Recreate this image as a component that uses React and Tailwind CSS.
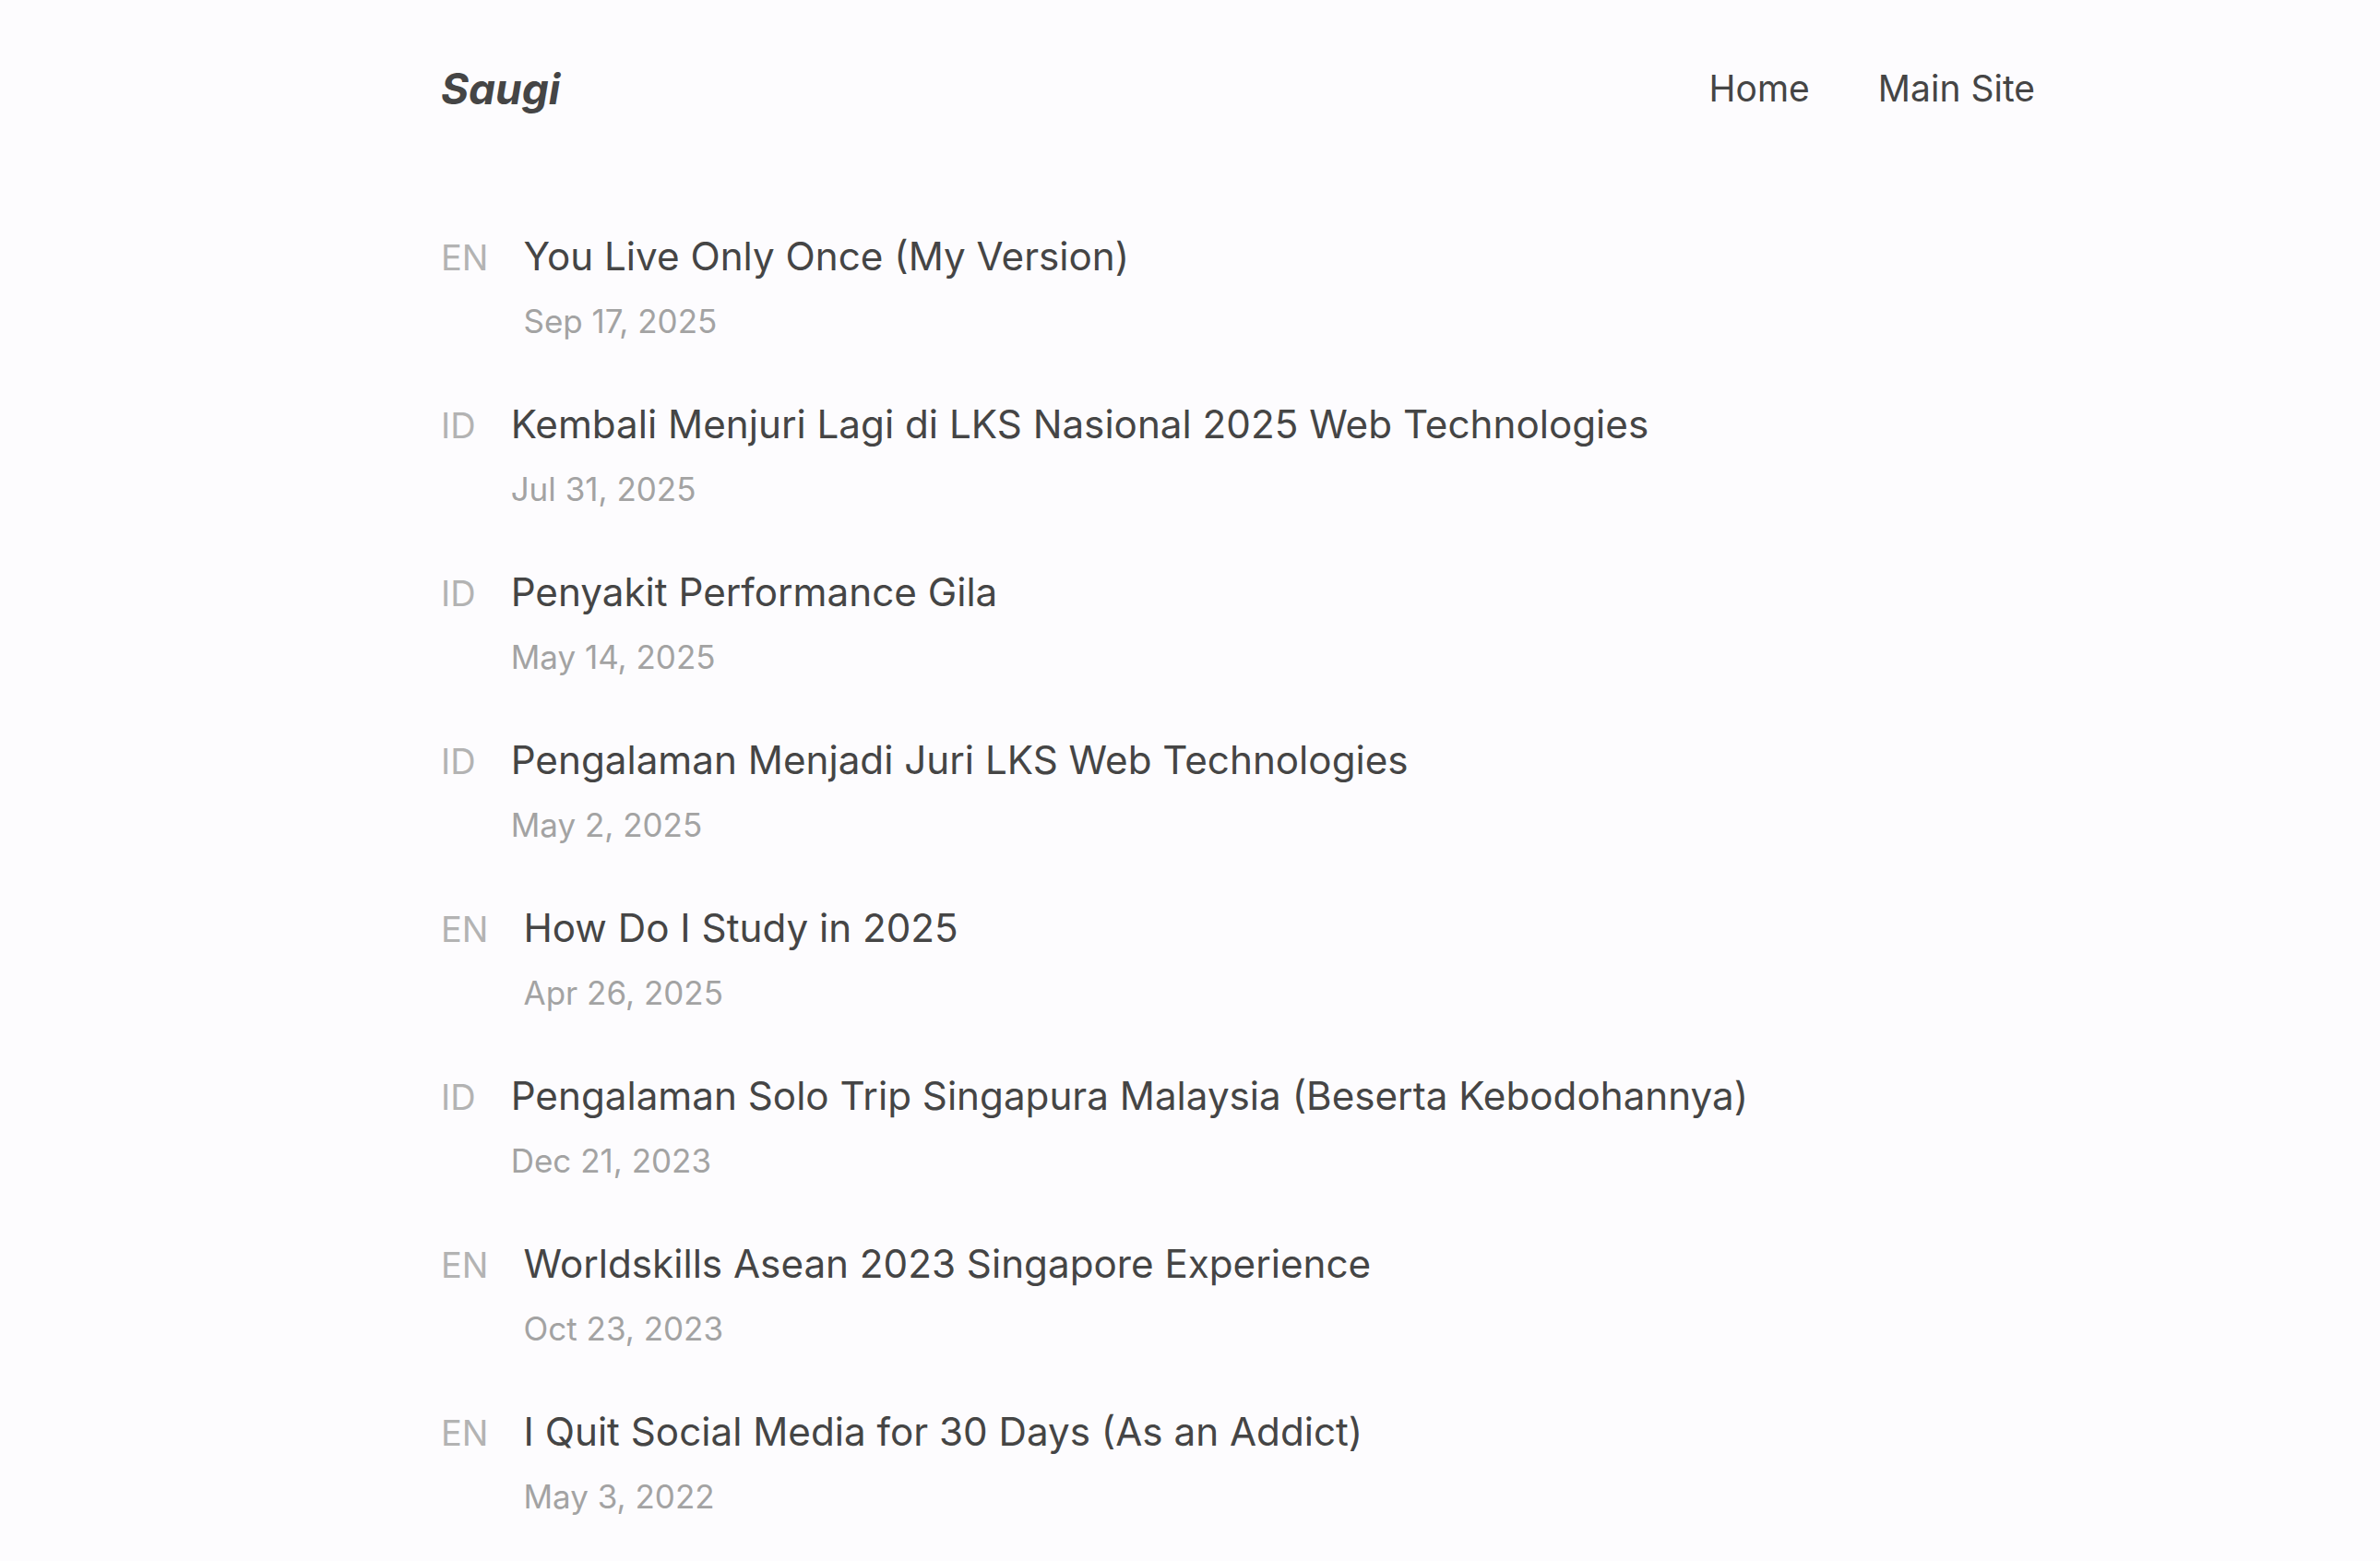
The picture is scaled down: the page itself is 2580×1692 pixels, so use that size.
import React from "react";

const posts = [
  { lang: "EN", title: "You Live Only Once (My Version)", date: "Sep 17, 2025" },
  { lang: "ID", title: "Kembali Menjuri Lagi di LKS Nasional 2025 Web Technologies", date: "Jul 31, 2025" },
  { lang: "ID", title: "Penyakit Performance Gila", date: "May 14, 2025" },
  { lang: "ID", title: "Pengalaman Menjadi Juri LKS Web Technologies", date: "May 2, 2025" },
  { lang: "EN", title: "How Do I Study in 2025", date: "Apr 26, 2025" },
  { lang: "ID", title: "Pengalaman Solo Trip Singapura Malaysia (Beserta Kebodohannya)", date: "Dec 21, 2023" },
  { lang: "EN", title: "Worldskills Asean 2023 Singapore Experience", date: "Oct 23, 2023" },
  { lang: "EN", title: "I Quit Social Media for 30 Days (As an Addict)", date: "May 3, 2022" },
];

const PostItem = ({ post }) => (
  <li className="flex items-baseline gap-[38px]">
    <span className="text-[38px] text-[#b3b3b3]">{post.lang}</span>
    <div className="flex flex-col">
      <a href="#" className="text-[42.2px] leading-[56px] text-[#454545]">
        {post.title}
      </a>
      <span className="mt-[22px] text-[35px] leading-[40px] text-[#a3a3a3]">{post.date}</span>
    </div>
  </li>
);

const App = () => {
  return (
    <div className="min-h-screen bg-[#fdfcfe] pt-[2px] font-['Inter',sans-serif]">
      <div className="mx-auto max-w-[1832px] pl-[104px]">
        <header className="flex h-[188px] items-center justify-between">
          <a href="#" className="text-[46px] font-bold italic text-[#454545]">
            Saugi
          </a>
          <nav className="flex gap-[74px] text-[39px] text-[#454545]">
            <a href="#">Home</a>
            <a href="#">Main Site</a>
          </nav>
        </header>

        <ul className="flex flex-col gap-[64px] pt-[60px]">
          {posts.map((post) => (
            <PostItem key={post.title} post={post} />
          ))}
        </ul>
      </div>
    </div>
  );
};

export default App;
